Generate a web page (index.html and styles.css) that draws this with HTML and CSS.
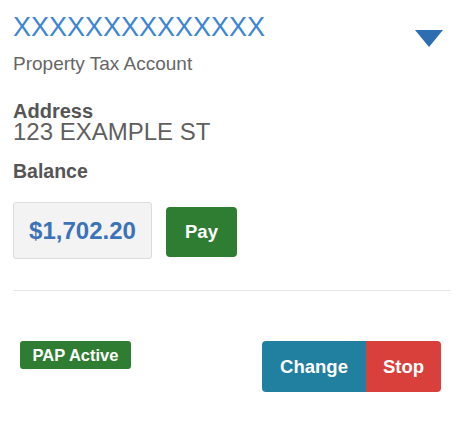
FILE: index.html
```html
<!DOCTYPE html>
<html>
<head>
<meta charset="utf-8">
<link rel="stylesheet" href="styles.css">
</head>
<body>
<div class="card">
  <div class="header">
    <div class="titles">
      <div class="title">XXXXXXXXXXXXXX</div>
      <div class="subtitle">Property Tax Account</div>
    </div>
    <svg class="caret" width="28" height="17" viewBox="0 0 28 17"><polygon points="0,0 28,0 14,17" fill="#2d6db2"/></svg>
  </div>
  <div class="label label-address">Address</div>
  <div class="value">123 EXAMPLE ST</div>
  <div class="label label-balance">Balance</div>
  <div class="balance-row">
    <div class="amount">$1,702.20</div>
    <button class="btn btn-pay">Pay</button>
  </div>
  <hr class="divider">
  <div class="pap-row">
    <span class="badge">PAP Active</span>
    <div class="btn-group">
      <button class="btn btn-change">Change</button>
      <button class="btn btn-stop">Stop</button>
    </div>
  </div>
</div>
</body>
</html>
```
FILE: styles.css
```css
html, body {
  margin: 0;
  padding: 0;
  background: #ffffff;
}
body {
  font-family: "Liberation Sans", Arial, sans-serif;
}
.card {
  padding: 12px 7px 0 13px;
}
.header {
  display: flex;
  justify-content: space-between;
  align-items: flex-start;
}
.title {
  font-size: 27px;
  line-height: 30px;
  color: #3d86d4;
}
.subtitle {
  margin-top: 11px;
  font-size: 19px;
  line-height: 22px;
  color: #666666;
}
.caret {
  display: block;
  margin-top: 18px;
  margin-right: 8px;
}
.label {
  font-weight: bold;
  font-size: 19.5px;
  line-height: 18px;
  color: #555555;
}
.label-address {
  margin-top: 27px;
  font-size: 20px;
}
.value {
  margin-top: 2px;
  font-size: 24px;
  line-height: 20px;
  color: #5f5f5f;
}
.label-balance {
  margin-top: 20px;
}
.balance-row {
  display: flex;
  align-items: flex-start;
  gap: 14px;
  margin-top: 22px;
}
.amount {
  box-sizing: border-box;
  width: 139px;
  height: 57px;
  display: flex;
  align-items: center;
  justify-content: center;
  background: #f3f3f3;
  border: 1px solid #dcdcdc;
  border-radius: 3px;
  font-weight: bold;
  font-size: 24px;
  color: #3b72b8;
}
.btn {
  border: none;
  margin: 0;
  font-family: "Liberation Sans", Arial, sans-serif;
  font-weight: bold;
  color: #ffffff;
  cursor: pointer;
}
.btn-pay {
  margin-top: 5px;
  width: 71px;
  height: 50px;
  background: #2e7d32;
  border-radius: 4px;
  font-size: 18.5px;
  padding: 0;
}
.divider {
  border: none;
  border-top: 1px solid #e6e6e6;
  margin: 31px 0 0 0;
  height: 0;
}
.pap-row {
  display: flex;
  justify-content: space-between;
  align-items: flex-start;
  margin-top: 50px;
  padding: 0 10px 0 7px;
}
.badge {
  display: inline-flex;
  align-items: center;
  height: 28px;
  padding: 0 11px;
  box-sizing: border-box;
  width: 111px;
  justify-content: center;
  background: #2f7d32;
  border-radius: 3px;
  color: #ffffff;
  font-weight: bold;
  font-size: 16.5px;
}
.btn-group {
  display: flex;
}
.btn-group .btn {
  height: 51px;
  font-size: 18.5px;
  padding: 0;
}
.btn-change {
  width: 104px;
  background: #21809f;
  border-radius: 4px 0 0 4px;
}
.btn-stop {
  width: 75px;
  background: #d9403b;
  border-radius: 0 4px 4px 0;
}
```
